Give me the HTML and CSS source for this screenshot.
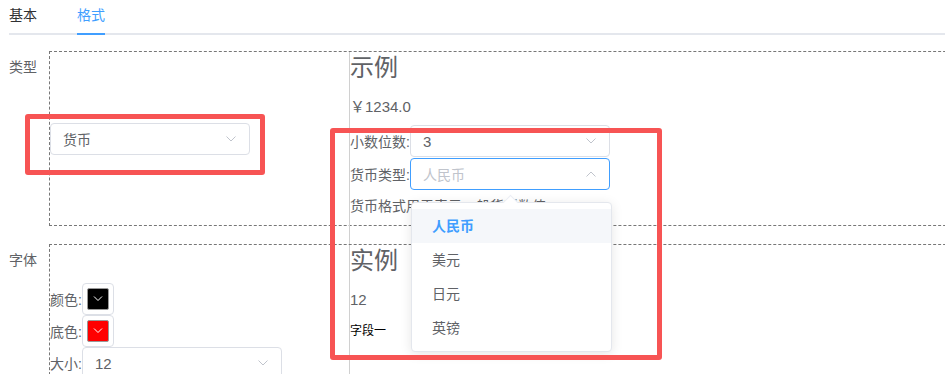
FILE: index.html
```html
<!DOCTYPE html>
<html lang="zh">
  <head>
    <meta charset="UTF-8" />
    <meta name="viewport" content="width=device-width, initial-scale=1.0" />
    <title>格式</title>
    <link rel="stylesheet" href="styles.css">
  </head>

  <body>
    <nav class="tabs">
      <div class="tab">基本</div>
      <div class="tab aktiv">格式</div>
    </nav>

    <form class="skema">
      <div class="felt">
        <label class="etiket">类型</label>
        <div class="ramme">
          <div class="side midt">
            <div class="vaelg">
              <span>货币</span>
              <svg width="10" height="6" viewBox="0 0 10 6"><path d="M0.5 0.5 L5 5 L9.5 0.5" fill="none" stroke="#c0c4cc" /></svg>
            </div>
          </div>
          <div class="eksempel">
            <h3>示例</h3>
            <p class="vaerdi">￥1234.0</p>
            <div class="linje">
              <span>小数位数:</span>
              <div class="vaelg">
                <span class="tal">3</span>
                <svg width="10" height="6" viewBox="0 0 10 6"><path d="M0.5 0.5 L5 5 L9.5 0.5" fill="none" stroke="#c0c4cc" /></svg>
              </div>
            </div>
            <div class="linje">
              <span>货币类型:</span>
              <div class="vaelg fokus">
                <span class="pladsholder">人民币</span>
                <svg width="10" height="6" viewBox="0 0 10 6"><path d="M0.5 5.5 L5 1 L9.5 5.5" fill="none" stroke="#c0c4cc" /></svg>
                <ul class="liste">
                  <li class="valgt">人民币</li>
                  <li>美元</li>
                  <li>日元</li>
                  <li>英镑</li>
                </ul>
              </div>
            </div>
            <p class="hint">货币格式用于表示一般货币数值</p>
          </div>
        </div>
      </div>

      <div class="felt">
        <label class="etiket">字体</label>
        <div class="ramme">
          <div class="side top">
            <div class="linje">
              <span>颜色:</span>
              <div class="farve"><span style="background: #000"><svg width="10" height="6" viewBox="0 0 10 6"><path d="M1 0.5 L5 4.5 L9 0.5" fill="none" stroke="#fff" /></svg></span></div>
            </div>
            <div class="linje">
              <span>底色:</span>
              <div class="farve"><span style="background: #f00"><svg width="10" height="6" viewBox="0 0 10 6"><path d="M1 0.5 L5 4.5 L9 0.5" fill="none" stroke="#fff" /></svg></span></div>
            </div>
            <div class="linje">
              <span>大小:</span>
              <div class="vaelg">
                <span class="tal">12</span>
                <svg width="10" height="6" viewBox="0 0 10 6"><path d="M0.5 0.5 L5 5 L9.5 0.5" fill="none" stroke="#c0c4cc" /></svg>
              </div>
            </div>
          </div>
          <div class="eksempel">
            <h3>实例</h3>
            <p class="vaerdi">12</p>
            <p class="felttekst">字段一</p>
          </div>
        </div>
      </div>
    </form>

    <!-- markeringer -->
    <div class="mark mark-type"></div>
    <div class="mark mark-valg"></div>
  </body>
</html>
```

FILE: styles.css
```css
body {
  margin: 0;
  padding-left: 9px;
  position: relative;
  overflow: hidden;
  height: 374px;
  font-family: "Liberation Sans", "Noto Sans CJK SC", sans-serif;
  font-size: 14px;
  color: #606266;
  background: #fff;
}
.tabs {
  display: flex;
  gap: 40px;
  margin-top: -5px;
  margin-bottom: 16px;
  box-shadow: inset 0 -2px 0 #e4e7ed;
}
.tab {
  height: 40px;
  line-height: 40px;
  color: #303133;
}
.tab.aktiv {
  color: #409eff;
  box-shadow: inset 0 -2px 0 #409eff;
}
.felt {
  display: flex;
  margin-bottom: 18px;
}
.etiket {
  width: 40px;
  flex: none;
  line-height: 32px;
}
.ramme {
  display: flex;
  width: 1000px;
  flex: none;
  border: 1px dashed #777;
}
.side {
  width: 299px;
  flex: none;
  display: flex;
  flex-direction: column;
}
.midt {
  justify-content: center;
}
.top {
  padding-top: 38px;
}
.eksempel {
  flex: 1;
  border-left: 1px solid #d0d0d0;
  padding-bottom: 22px;
  margin-bottom: -19px;
}
.eksempel h3 {
  margin: 0;
  font-size: 24px;
  font-weight: normal;
  line-height: 32px;
}
.vaerdi {
  margin: 11px 0 6px;
  line-height: 24px;
  font-size: 15px;
}
.tal {
  font-size: 15px;
}
.linje {
  display: flex;
  align-items: center;
  margin-bottom: 1px;
}
.side .linje {
  margin-bottom: 0;
}
.hint {
  margin: 0;
  line-height: 31px;
}
.felttekst {
  margin: 7px 0 0;
  line-height: 24px;
  font-size: 12px;
  color: #000;
}
.vaelg {
  position: relative;
  box-sizing: border-box;
  width: 200px;
  height: 32px;
  padding: 0 13px 0 12px;
  border: 1px solid #dcdfe6;
  border-radius: 4px;
  display: flex;
  align-items: center;
  justify-content: space-between;
  background: #fff;
}
.vaelg.fokus {
  border-color: #409eff;
}
.pladsholder {
  color: #c0c4cc;
}
.liste {
  position: absolute;
  top: 43px;
  left: 0;
  box-sizing: border-box;
  width: 201px;
  margin: 0;
  padding: 6px 0;
  list-style: none;
  background: #fff;
  border: 1px solid #e4e7ed;
  border-radius: 4px;
  box-shadow: 0 2px 12px rgba(0, 0, 0, 0.1);
  z-index: 2;
}
.liste::before {
  content: "";
  position: absolute;
  top: -6px;
  left: 93px;
  width: 10px;
  height: 10px;
  background: #fff;
  border-top: 1px solid #ebeef5;
  border-left: 1px solid #ebeef5;
  transform: rotate(45deg);
}
.liste li {
  position: relative;
  height: 34px;
  line-height: 34px;
  padding: 0 20px;
  color: #606266;
}
.liste li.valgt {
  color: #409eff;
  font-weight: 700;
  background: #f5f7fa;
}
.farve {
  box-sizing: border-box;
  width: 32px;
  height: 32px;
  padding: 4px;
  border: 1px solid #dcdfe6;
  border-radius: 4px;
}
.farve span {
  box-sizing: border-box;
  width: 22px;
  height: 22px;
  border: 1px solid #999;
  border-radius: 2px;
  display: flex;
  align-items: center;
  justify-content: center;
}
.mark {
  position: absolute;
  border: 5px solid #f75454;
  border-radius: 3px;
  z-index: 3;
}
.mark-type {
  left: 25px;
  top: 114px;
  width: 230px;
  height: 51px;
}
.mark-valg {
  left: 330px;
  top: 128px;
  width: 322px;
  height: 222px;
}
```
